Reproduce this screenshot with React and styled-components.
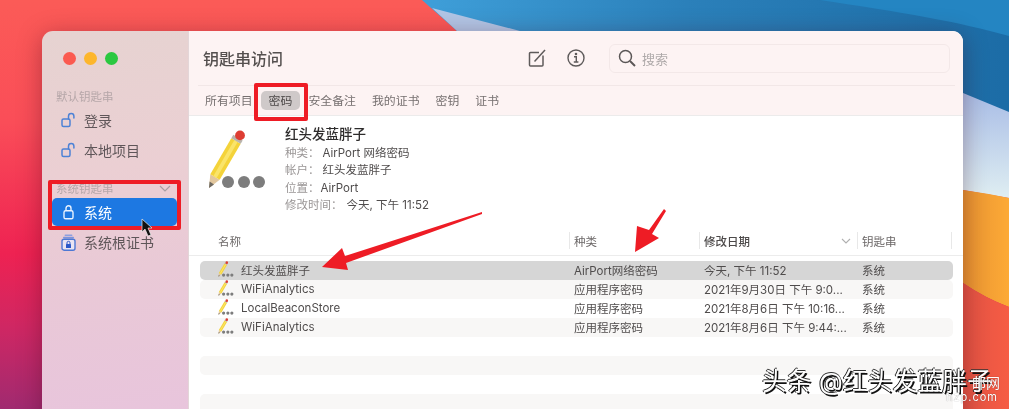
import React from "react";
import styled, { createGlobalStyle } from "styled-components";

const FONT = `"Inter", "Noto Sans CJK SC", "Liberation Sans", sans-serif`;

const Global = createGlobalStyle`
  html, body { margin: 0; padding: 0; background: #f25a55; }
  body { font-family: ${FONT}; -webkit-font-smoothing: antialiased; }
`;

const Page = styled.div`
  position: relative;
  width: 1009px;
  height: 409px;
  overflow: hidden;
  padding: 31px 0 0 42px;
  box-sizing: border-box;
  filter: blur(0.35px);
`;

const Backdrop = styled.svg`
  position: absolute;
  inset: 0;
  width: 1009px;
  height: 409px;
`;

const Overlay = styled.svg`
  position: absolute;
  inset: 0;
  width: 1009px;
  height: 409px;
  pointer-events: none;
`;

const Win = styled.div`
  position: relative;
  display: flex;
  width: 921px;
  height: 400px;
  border-radius: 11px 11px 0 0;
  overflow: hidden;
  box-shadow: 0 4px 24px rgba(60, 0, 20, 0.35);
`;

const Sidebar = styled.aside`
  width: 147px;
  flex: none;
  box-sizing: border-box;
  padding: 21px 0 0 10px;
  background: linear-gradient(172deg, #e6d3d1 0%, #ebcfd3 35%, #e9c9d6 60%, #e8c4dd 100%);
  border-right: 1px solid #e3d6d8;
`;

const Lights = styled.div`
  display: flex;
  gap: 8px;
  margin: 0 0 23px 11px;
`;

const Light = styled.span`
  width: 13px;
  height: 13px;
  border-radius: 50%;
  background: ${(p) => p.$c};
`;

const SectionLabel = styled.div`
  display: flex;
  justify-content: space-between;
  align-items: center;
  height: 16px;
  margin: ${(p) => p.$m};
  padding: 0 6px 0 4px;
  width: 125px;
  box-sizing: border-box;
  font-size: 11.5px;
  color: #b6a7a9;
  white-space: nowrap;
`;

const SideRow = styled.div`
  display: flex;
  align-items: center;
  gap: 8px;
  width: 125px;
  height: ${(p) => p.$h || 30}px;
  box-sizing: border-box;
  padding-left: 9px;
  border-radius: 5px;
  font-size: 14px;
  color: ${(p) => (p.$active ? "#fff" : "#5f5659")};
  background: ${(p) => (p.$active ? "#1d78e2" : "transparent")};
`;

const Main = styled.main`
  flex: 1;
  display: flex;
  flex-direction: column;
  background: #fff;
  min-width: 0;
`;

const TopArea = styled.header`
  background: #fdf3f3;
  height: 85px;
  box-sizing: border-box;
  border-bottom: 1px solid #ecebeb;
`;

const Toolbar = styled.div`
  display: flex;
  align-items: center;
  height: 55px;
  margin: 0 8px 0 9px;
  padding: 0 5px;
  box-sizing: border-box;
  border-bottom: 1px solid #f2e7e7;
`;

const Title = styled.h1`
  margin: 0;
  width: 325px;
  font-size: 16px;
  font-weight: 500;
  color: #55504f;
  white-space: nowrap;
`;

const ToolIcon = styled.svg`
  width: ${(p) => p.$w}px;
  height: 20px;
  margin-right: ${(p) => p.$mr}px;
  flex: none;
`;

const SearchBox = styled.div`
  display: flex;
  align-items: center;
  gap: 6px;
  width: 341px;
  height: 29px;
  margin-left: auto;
  box-sizing: border-box;
  padding-left: 8px;
  border: 1px solid #f3e8e8;
  border-radius: 6px;
  font-size: 13px;
  color: #aea9a9;
`;

const Tabs = styled.nav`
  display: flex;
  align-items: center;
  height: 29px;
  padding-left: 8px;
`;

const Tab = styled.span`
  height: 19px;
  line-height: 19px;
  padding: 0 8px;
  border-radius: 5px;
  font-size: 11.9px;
  white-space: nowrap;
  color: ${(p) => (p.$active ? "#4c4848" : "#767070")};
  background: ${(p) => (p.$active ? "#cfc9c9" : "transparent")};
`;

const Detail = styled.section`
  display: flex;
  height: 116px;
  box-sizing: border-box;
  padding: 14px 0 0 18px;
`;

const BigPencil = styled.svg`
  width: 60px;
  height: 62px;
  flex: none;
`;

const Info = styled.div`
  margin-left: 18px;
  margin-top: -5px;
`;

const InfoName = styled.div`
  height: 19px;
  line-height: 19px;
  font-size: 13.5px;
  font-weight: 500;
  color: #2e2c2c;
  margin-bottom: 0.5px;
`;

const InfoLine = styled.div`
  display: flex;
  height: 17.5px;
  line-height: 17.5px;
  font-size: 11.5px;
  color: #4f4c4c;
  white-space: nowrap;
`;

const InfoKey = styled.span`
  color: #9a9696;
  margin-right: ${(p) => p.$gap}px;
`;

const HeadRow = styled.div`
  display: grid;
  grid-template-columns: 370px 130px 158px 94px;
  height: 24px;
  box-sizing: border-box;
  padding-left: 11px;
  padding-bottom: 6px;
  border-bottom: 1px solid #ececec;
`;

const HeadCell = styled.div`
  display: flex;
  align-items: center;
  justify-content: space-between;
  box-sizing: border-box;
  padding: 0 6px 0 ${(p) => p.$pl ?? 4}px;
  font-size: 11.5px;
  color: ${(p) => (p.$sorted ? "#4d4a4a" : "#6b6767")};
  font-weight: ${(p) => (p.$sorted ? 500 : 400)};
  border-right: 1px solid #e8e8e8;
`;

const Rows = styled.div`
  margin: 5px 10px 0 11px;
`;

const Row = styled.div`
  display: grid;
  grid-template-columns: 370px 130px 158px 1fr;
  align-items: center;
  height: 19px;
  box-sizing: border-box;
  padding-bottom: 2px;
  font-size: 11.5px;
  color: #4f4c4c;
  border-radius: 5px;
  background: ${(p) => (p.$selected ? "#d6d6d6" : p.$stripe ? "#f8f7f6" : "transparent")};
`;

const NameCell = styled.div`
  display: flex;
  align-items: center;
  gap: 7px;
  padding-left: 18px;
  white-space: nowrap;
`;

const Cell = styled.div`
  padding-left: 4px;
  white-space: nowrap;
  overflow: hidden;
`;

const SmallPencil = styled.svg`
  width: 16px;
  height: 17px;
  flex: none;
`;

const Mark = styled.div`
  position: absolute;
  left: ${(p) => p.$x}px;
  top: ${(p) => p.$y}px;
  width: ${(p) => p.$w}px;
  height: ${(p) => p.$h}px;
  box-sizing: border-box;
  border: 4px solid #ee1c25;
  border-radius: 2px;
`;

const Watermark = styled.div`
  position: absolute;
  left: 762px;
  top: 366px;
  font-size: 24.5px;
  line-height: 30px;
  letter-spacing: 0.35px;
  color: #fff;
  white-space: nowrap;
  text-shadow: 1.5px 1.5px 0 #111, -1px 0 0 #222, 0 -1px 0 #333;
`;

const Site = styled.div`
  position: absolute;
  right: ${(p) => p.$r}px;
  top: ${(p) => p.$t}px;
  font-size: ${(p) => p.$s}px;
  letter-spacing: ${(p) => p.$ls || 0}px;
  color: #fff;
  white-space: nowrap;
  text-shadow: 0 0 1px rgba(0, 0, 0, 0.5);
`;

const PencilArt = () => (
  <>
    <polygon points="2,58 3.3,44.2 12.7,49.8" fill="#e2c79e" />
    <polygon points="2,58 2.6,51.5 7,54.5" fill="#6f6a62" />
    <polygon points="3.3,44.2 24.3,8.2 33.7,13.8 12.7,49.8" fill="#f4d33a" />
    <polygon points="6.4,46 27.4,10 30.6,12 9.6,48" fill="#fae46a" />
    <polygon points="24.3,8.2 26.3,4.8 35.7,10.4 33.7,13.8" fill="#b9b4ad" />
    <circle cx="33" cy="5.4" r="4.9" fill="#dd3d33" />
  </>
);

const Dots = () => (
  <g fill="#7d7d7d">
    <circle cx="21" cy="52" r="6" />
    <circle cx="37" cy="52" r="6" />
    <circle cx="52" cy="52" r="6" />
  </g>
);

const OpenLock = () => (
  <svg width="15" height="16" viewBox="0 0 15 16" fill="none" stroke="#4d82d6" strokeWidth="1.5">
    <rect x="1" y="7" width="8" height="7.5" rx="1.5" />
    <path d="M7.5 7V4.2a2.7 2.7 0 0 1 5.4 0V6" strokeLinecap="round" />
  </svg>
);

const ClosedLock = () => (
  <svg width="15" height="16" viewBox="0 0 15 16" fill="none" stroke="#e8f2ff" strokeWidth="1.4">
    <rect x="3" y="6.8" width="9" height="8" rx="1.6" />
    <path d="M5 6.8V4.2a2.5 2.5 0 0 1 5 0v2.6" />
  </svg>
);

const CertIcon = () => (
  <svg width="15" height="17" viewBox="0 0 15 17">
    <rect x="3.5" y="0.5" width="8" height="1.6" rx="0.8" fill="#8c9fdf" />
    <rect x="2" y="2.8" width="11" height="1.6" rx="0.8" fill="#7d93dc" />
    <rect x="1" y="5.2" width="13" height="11" rx="2" fill="#e9e4f2" stroke="#4d78d4" strokeWidth="1.4" />
    <rect x="5" y="10" width="5" height="4" rx="0.6" fill="#2a58c8" />
    <path d="M6 10V8.8a1.5 1.5 0 0 1 3 0V10" fill="none" stroke="#2a58c8" strokeWidth="1" />
  </svg>
);

const ROWS = [
  ["红头发蓝胖子", "AirPort网络密码", "今天, 下午 11:52"],
  ["WiFiAnalytics", "应用程序密码", "2021年9月30日 下午 9:0..."],
  ["LocalBeaconStore", "应用程序密码", "2021年8月6日 下午 10:16..."],
  ["WiFiAnalytics", "应用程序密码", "2021年8月6日 下午 9:44:..."],
];

export default function App() {
  return (
    <>
      <Global />
      <Page>
        <Backdrop viewBox="0 0 1009 409">
          <defs>
            <linearGradient id="red" x1="0" y1="0" x2="0" y2="1">
              <stop offset="0" stopColor="#fb5b57" />
              <stop offset="0.3" stopColor="#fa4d58" />
              <stop offset="0.62" stopColor="#ee2252" />
              <stop offset="0.8" stopColor="#cf2763" />
              <stop offset="1" stopColor="#a02a70" />
            </linearGradient>
            <linearGradient id="blue" x1="0" y1="0" x2="1" y2="0">
              <stop offset="0" stopColor="#3f9fd9" />
              <stop offset="0.45" stopColor="#2b80ba" />
              <stop offset="1" stopColor="#1c6ca6" />
            </linearGradient>
            <linearGradient id="sky" x1="0" y1="0" x2="0" y2="1">
              <stop offset="0" stopColor="#a9bde6" />
              <stop offset="1" stopColor="#dfeef2" />
            </linearGradient>
            <linearGradient id="orange" x1="0" y1="0" x2="1" y2="0">
              <stop offset="0" stopColor="#e89332" />
              <stop offset="1" stopColor="#fdaa36" />
            </linearGradient>
            <linearGradient id="coral" x1="0" y1="0" x2="1" y2="0">
              <stop offset="0" stopColor="#e25344" />
              <stop offset="1" stopColor="#f65c44" />
            </linearGradient>
          </defs>
          <rect width="1009" height="409" fill="url(#red)" />
          <polygon points="422,0 1009,0 1009,120 520,31 457,31" fill="url(#blue)" />
          <path d="M820 0C900 12 960 22 1009 36V0Z" fill="#2485c2" />
          <polygon points="432,8 520,31 457,31" fill="#b2c6e6" />
          <polygon points="963,93 1009,112 1009,198 963,190" fill="url(#sky)" />
          <path d="M963 190Q985 193 1009 198V307Q985 298 963 283Z" fill="url(#orange)" />
          <path d="M963 283Q985 298 1009 307V409H963Z" fill="url(#coral)" />
        </Backdrop>

        <Win>
          <Sidebar>
            <Lights>
              <Light $c="#fb5a50" />
              <Light $c="#fdb62c" />
              <Light $c="#2bc840" />
            </Lights>
            <SectionLabel $m="0 0 1px">默认钥匙串</SectionLabel>
            <SideRow>
              <OpenLock />
              登录
            </SideRow>
            <SideRow>
              <OpenLock />
              本地项目
            </SideRow>
            <SectionLabel $m="15px 0 2px">
              系统钥匙串
              <svg width="12" height="7" viewBox="0 0 12 7" fill="none" stroke="#a99ea2" strokeWidth="1.2">
                <path d="M1 1l5 5 5-5" />
              </svg>
            </SectionLabel>
            <SideRow $active $h={28}>
              <ClosedLock />
              系统
            </SideRow>
            <SideRow $h={32}>
              <CertIcon />
              系统根证书
            </SideRow>
          </Sidebar>

          <Main>
            <TopArea>
              <Toolbar>
                <Title>钥匙串访问</Title>
                <ToolIcon $w={18} $mr={21} viewBox="0 0 18 20" fill="none" stroke="#5e5a5a" strokeWidth="1.5">
                  <path d="M15 7.5V17a1 1 0 0 1-1 1H2.5a1 1 0 0 1-1-1V5.5a1 1 0 0 1 1-1H11" />
                  <path d="M6.5 13.5L17 2" />
                </ToolIcon>
                <ToolIcon $w={18} $mr={24} viewBox="0 0 18 20" fill="none" stroke="#5e5a5a" strokeWidth="1.4">
                  <circle cx="9" cy="10" r="8" />
                  <path d="M7 8.8h2.3v5M6.8 14h4.6" />
                  <circle cx="9" cy="6" r="0.6" fill="#5e5a5a" />
                </ToolIcon>
                <SearchBox>
                  <svg width="18" height="18" viewBox="0 0 18 18" fill="none" stroke="#5b5757" strokeWidth="1.5">
                    <circle cx="7.5" cy="7.5" r="6" />
                    <path d="M12 12l5 5" strokeWidth="1.9" />
                  </svg>
                  搜索
                </SearchBox>
              </Toolbar>
              <Tabs>
                <Tab>所有项目</Tab>
                <Tab $active>密码</Tab>
                <Tab>安全备注</Tab>
                <Tab>我的证书</Tab>
                <Tab>密钥</Tab>
                <Tab>证书</Tab>
              </Tabs>
            </TopArea>

            <Detail>
              <BigPencil viewBox="0 0 60 62">
                <PencilArt />
                <Dots />
              </BigPencil>
              <Info>
                <InfoName>红头发蓝胖子</InfoName>
                <InfoLine>
                  <InfoKey $gap={3}>种类：</InfoKey>AirPort 网络密码
                </InfoLine>
                <InfoLine>
                  <InfoKey $gap={3}>帐户：</InfoKey>红头发蓝胖子
                </InfoLine>
                <InfoLine>
                  <InfoKey $gap={1}>位置：</InfoKey>AirPort
                </InfoLine>
                <InfoLine>
                  <InfoKey $gap={4}>修改时间：</InfoKey>今天, 下午 11:52
                </InfoLine>
              </Info>
            </Detail>

            <HeadRow>
              <HeadCell $pl={18}>名称</HeadCell>
              <HeadCell>种类</HeadCell>
              <HeadCell $sorted>
                修改日期
                <svg width="10" height="6" viewBox="0 0 10 6" fill="none" stroke="#b0b0b0" strokeWidth="1.1">
                  <path d="M1 1l4 4 4-4" />
                </svg>
              </HeadCell>
              <HeadCell>钥匙串</HeadCell>
            </HeadRow>

            <Rows>
              {ROWS.map(([n, k, d], i) => (
                <Row key={i} $selected={i === 0} $stripe={i % 2 === 1}>
                  <NameCell>
                    <SmallPencil viewBox="0 0 60 62">
                      <PencilArt />
                      <Dots />
                    </SmallPencil>
                    {n}
                  </NameCell>
                  <Cell>{k}</Cell>
                  <Cell>{d}</Cell>
                  <Cell>系统</Cell>
                </Row>
              ))}
              {[4, 5, 6, 7].map((i) => (
                <Row key={i} $stripe={i % 2 === 1} />
              ))}
            </Rows>
          </Main>
        </Win>

        <Mark $x={254} $y={83} $w={54} $h={38} />
        <Mark $x={48} $y={180} $w={133} $h={50} />

        <Overlay viewBox="0 0 1009 409">
          <polygon points="482,212 345,256 342,248 322,267 348,270 346,263 482,214" fill="#ee1c25" />
          <polygon points="664,209 649,230 637,226 635,252 659,238 652,234 666,211" fill="#ee1c25" />
          <path d="M142 219l0 13 3-3 3 7 3-1-3-7 4 0z" fill="#111" stroke="#eee" strokeWidth="0.7" />
        </Overlay>

        <Watermark>头条 @红头发蓝胖子</Watermark>
        <Site $r={9} $t={372} $s={14}>邮网</Site>
        <Site $r={11} $t={390} $s={11} $ls={1}>nzp.com</Site>
      </Page>
    </>
  );
}
